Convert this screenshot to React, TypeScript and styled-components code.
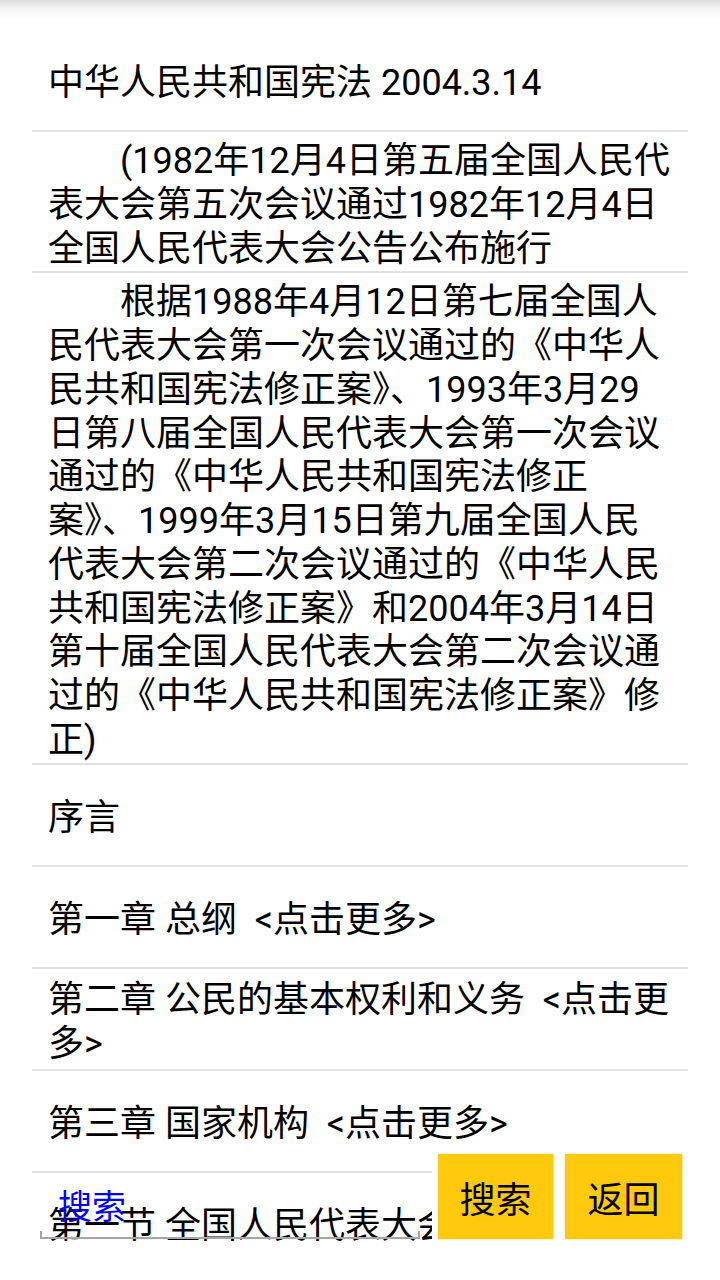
import React from "react";
import styled, { createGlobalStyle } from "styled-components";

const GlobalStyle = createGlobalStyle`
  html, body {
    margin: 0;
    padding: 0;
    background: #ffffff;
  }
  body {
    font-family: Roboto, "Noto Sans CJK SC", sans-serif;
    color: #000000;
  }
  * { box-sizing: border-box; }
`;

const Page = styled.div`
  position: relative;
  width: 720px;
  height: 1280px;
  overflow: hidden;
  background: #ffffff;
`;

const TopShade = styled.div`
  height: 30px;
  background: linear-gradient(to bottom, #dcdcdc 0px, #f4f4f4 8px, #ffffff 20px);
`;

const List = styled.div`
  display: flex;
  flex-direction: column;
  height: 1232px;
  overflow: hidden;
`;

const Item = styled.div`
  display: flex;
  align-items: center;
  min-height: 102px;
  margin: 0 32px;
  padding: 8px 13px 0 16px;
  border-bottom: 2px solid #e3e3e3;
  flex-shrink: 0;
`;

const ItemText = styled.div`
  font-family: Roboto, "Noto Sans CJK SC", sans-serif;
  font-size: 36px;
  line-height: 43.75px;
  white-space: pre-wrap;
  word-break: normal;
  line-break: strict;
  color: #000000;
`;

const BottomBar = styled.div`
  position: absolute;
  left: 0;
  right: 0;
  bottom: 0;
  height: 134px;
  display: flex;
  align-items: flex-start;
`;

const SearchField = styled.div`
  margin-left: 40px;
  width: 380px;
  height: 93px;
  display: flex;
  flex-direction: column;
  justify-content: flex-end;
`;

const SearchText = styled.div`
  font-family: Roboto, "Noto Sans CJK SC", sans-serif;
  font-size: 34px;
  line-height: 40px;
  color: #0000ff;
  padding-left: 18px;
  margin-bottom: 4px;
`;

const Underline = styled.div`
  height: 8px;
  border: 2px solid #a6a6a6;
  border-top: none;
`;

const ButtonPanel = styled.div`
  margin-left: 12px;
  flex: 1;
  align-self: stretch;
  background: #ffffff;
  display: flex;
  align-items: flex-start;
  gap: 12px;
  padding: 8px 38px 0 6px;
`;

const YellowButton = styled.button<{ $w: number }>`
  width: ${(p) => p.$w}px;
  height: 85px;
  border: none;
  border-radius: 1px;
  background: #ffc90e;
  box-shadow: 0 0 2px rgba(255, 201, 14, 0.8);
  font-family: Roboto, "Noto Sans CJK SC", sans-serif;
  font-size: 36px;
  color: #000000;
  padding: 0;
  display: flex;
  align-items: center;
  justify-content: center;
  cursor: pointer;
`;

const items: string[] = [
  "中华人民共和国宪法 2004.3.14",
  "\u3000\u3000(1982年12月4日第五届全国人民代表大会第五次会议通过1982年12月4日全国人民代表大会公告公布施行",
  "\u3000\u3000根据1988年4月12日第七届全国人民代表大会第一次会议通过的《中华人民共和国宪法修正案》、1993年3月29日第八届全国人民代表大会第一次会议通过的《中华人民共和国宪法修正案》、1999年3月15日第九届全国人民代表大会第二次会议通过的《中华人民共和国宪法修正案》和2004年3月14日第十届全国人民代表大会第二次会议通过的《中华人民共和国宪法修正案》修正)",
  "序言",
  "第一章 总纲  <点击更多>",
  "第二章 公民的基本权利和义务  <点击更多>",
  "第三章 国家机构  <点击更多>",
  "第一节 全国人民代表大会  <点击更多>",
];

export default function App() {
  return (
    <>
      <GlobalStyle />
      <Page>
        <TopShade />
        <List>
          {items.map((t, i) => (
            <Item key={i}>
              <ItemText>{t}</ItemText>
            </Item>
          ))}
        </List>
        <BottomBar>
          <SearchField>
            <SearchText>搜索</SearchText>
            <Underline />
          </SearchField>
          <ButtonPanel>
            <YellowButton $w={115}>搜索</YellowButton>
            <YellowButton $w={117}>返回</YellowButton>
          </ButtonPanel>
        </BottomBar>
      </Page>
    </>
  );
}
